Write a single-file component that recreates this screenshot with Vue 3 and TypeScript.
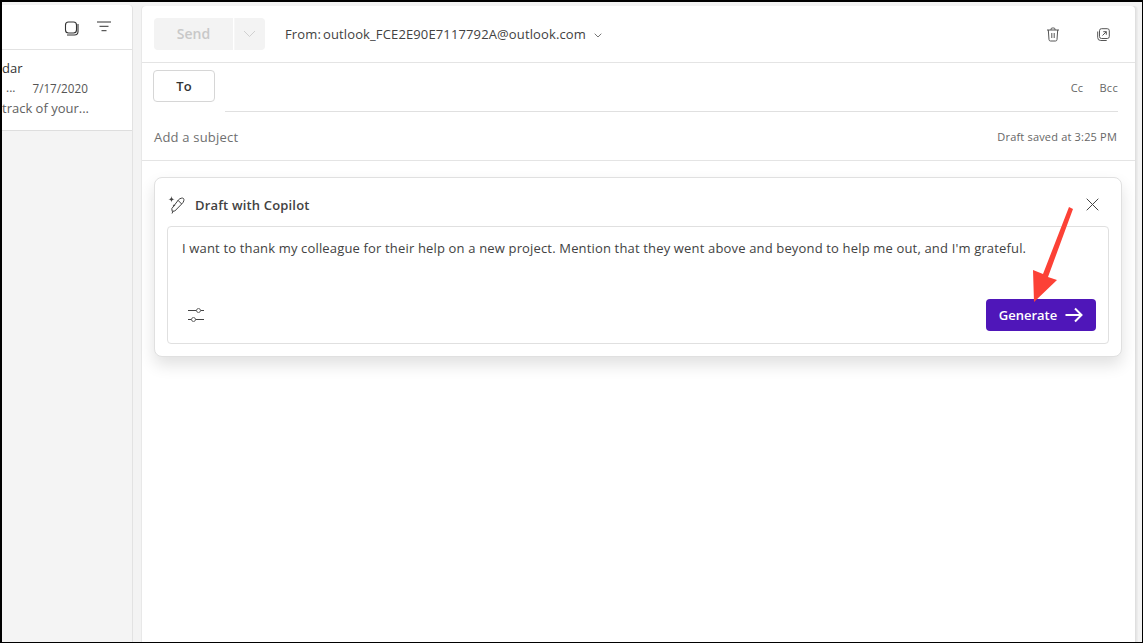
<script setup lang="ts">
const sender = 'outlook_FCE2E90E7117792A@outlook.com'
const prompt = "I want to thank my colleague for their help on a new project. Mention that they went above and beyond to help me out, and I'm grateful."
</script>

<template>
  <div class="frame">
    <aside class="list">
      <div class="list-head">
        <svg class="ic-select" width="15" height="15" viewBox="0 0 15 15" fill="none" stroke="#333" stroke-width="1.1">
          <rect x="1.5" y="1" width="11" height="11" rx="3" />
          <path d="M3 14h7.500a3.500 3.500 0 0 0 3.500-3.500V3" />
        </svg>
        <svg class="ic-filter" width="16" height="14" viewBox="0 0 16 14" fill="none" stroke="#333" stroke-width="1">
          <path d="M1 2h14M3.500 6.300h9M5.500 10.700h5" />
        </svg>
      </div>
      <div class="mail">
        <div class="m-from">dar</div>
        <div class="m-sub"><span class="dots">...</span><span class="m-date">7/17/2020</span></div>
        <div class="m-prev">track of your...</div>
      </div>
    </aside>

    <main class="pane">
      <div class="toolbar">
        <div class="send">
          <span class="send-main">Send</span>
          <span class="send-drop">
            <svg width="13" height="8" viewBox="0 0 13 8" fill="none" stroke="#d0d0d0" stroke-width="1"><path d="M1 1l5.500 5.500L12 1" /></svg>
          </span>
        </div>
        <div class="from">
          <span class="from-l">From:</span><span>{{ sender }}</span>
          <svg class="from-chev" width="8" height="5" viewBox="0 0 8 5" fill="none" stroke="#666" stroke-width="0.9"><path d="M.7.7 4 4 7.300.7" /></svg>
        </div>
        <div class="tools">
          <svg width="14" height="15" viewBox="0 0 14 15" fill="none" stroke="#555" stroke-width="1">
            <path d="M1 3h12M5 3V2.200A1.200 1.200 0 0 1 6.200 1h1.600A1.200 1.200 0 0 1 9 2.200V3M2.300 3l.7 9.600A1.500 1.500 0 0 0 4.500 14h5a1.500 1.500 0 0 0 1.500-1.400L11.700 3M5.800 6v5M8.200 6v5" />
          </svg>
          <svg width="13" height="13" viewBox="0 0 13 13" fill="none" stroke="#555" stroke-width="1">
            <rect x="2.500" y="0.700" width="9.800" height="9.800" rx="2" />
            <path d="M0.700 3.500v6a3 3 0 0 0 3 3h6M5.500 7.500 9.300 3.700M6.300 3.700h3v3" />
          </svg>
        </div>
      </div>

      <div class="to-row">
        <button class="to-btn">To</button>
        <div class="to-field">
          <span>Cc</span>
          <span>Bcc</span>
        </div>
      </div>

      <div class="subject">
        <span class="subj-text">Add a subject</span>
        <span class="saved">Draft saved at 3:25 PM</span>
      </div>

      <section class="copilot">
        <header class="cp-head">
          <svg class="cp-icon" width="19" height="19" viewBox="0 0 19 19" fill="none" stroke="#424242" stroke-width="1">
            <path d="M4.500 0c.3 2.300.9 3 3.200 3.300-2.300.3-2.900 1-3.200 3.300-.3-2.300-.9-3-3.200-3.300 2.300-.3 2.900-1 3.200-3.300z" fill="#424242" stroke="none" />
            <path d="M11.500 3.800c1.500-1.500 4-2.300 5-1.300s.2 3.500-1.300 5L7.800 15l-2.600.3-.4-2.700z" />
            <path d="M5 17.500l1-2.200M11 4.300l3.700 3.700" />
            <path d="M7 8c.1.900.5 1.300 1.400 1.400C7.500 9.500 7.100 9.900 7 10.800 6.900 9.900 6.500 9.500 5.600 9.400 6.500 9.300 6.900 8.900 7 8z" fill="#424242" stroke="none" />
          </svg>
          <span class="cp-title">Draft with Copilot</span>
          <svg class="cp-close" width="13" height="13" viewBox="0 0 13 13" fill="none" stroke="#444" stroke-width="1"><path d="M.7.7l11.600 11.600M12.300.7.700 12.300" /></svg>
        </header>
        <div class="cp-box">
          <p class="cp-text">{{ prompt }}</p>
          <div class="cp-foot">
            <svg width="16" height="14" viewBox="0 0 16 14" fill="none" stroke="#444" stroke-width="1">
              <path d="M0 2.500H8.500M12.500 2.500h3.500M0 11.500h3.500M7.500 11.500h8.500" />
              <circle cx="10.500" cy="2.500" r="2" stroke="#666" />
              <circle cx="5.500" cy="11.500" r="2" stroke="#666" />
            </svg>
            <button class="gen">
              Generate
              <svg width="18" height="16" viewBox="0 0 18 16" fill="none" stroke="#fff" stroke-width="2"><path d="M.5 8h15.800M10 1.500 16.500 8 10 14.500" /></svg>
            </button>
          </div>
        </div>
      </section>

      <svg class="arrow" width="46" height="100" viewBox="0 0 46 100">
        <path d="M39 2 43 4 18 72 27 75 4 97 3 65 13 69z" fill="#fc4136" />
      </svg>
    </main>
  </div>
</template>

<style scoped>
.frame {
  box-sizing: border-box;
  width: 1143px;
  height: 643px;
  background: #000;
  padding: 2px 1px 1px 2px;
  display: flex;
  font-family: "Open Sans", "Noto Sans", sans-serif;
  color: #333;
  overflow: hidden;
  position: relative;
}
.frame::before {
  content: "";
  position: absolute;
  inset: 2px 1px 1px 2px;
  background: #f3f3f3;
}
.list {
  position: relative;
  width: 130px;
  margin-top: 3px;
  background: #f4f4f4;
  border-right: 1px solid #e2e2e2;
  border-top-right-radius: 4px;
  align-self: stretch;
}
.list-head {
  box-sizing: border-box;
  height: 45px;
  background: #fff;
  border-bottom: 1px solid #e2e2e2;
  border-top-right-radius: 4px;
  display: flex;
  align-items: center;
  justify-content: flex-end;
  gap: 17px;
  padding-right: 20px;
}
.ic-select { margin-top: 3px; }
.mail {
  box-sizing: border-box;
  height: 81px;
  background: #fff;
  border-bottom: 1px solid #dedede;
  padding-top: 8px;
  font-size: 12px;
  line-height: 20px;
}
.m-from { font-size: 13px; color: #333; }
.m-sub { display: flex; color: #555; }
.dots { margin-left: 4px; }
.m-date { margin-left: 17px; font-size: 11.7px; }
.m-prev { color: #616161; font-size: 13px; }

.pane {
  position: relative;
  width: 993px;
  margin: 4px 0 0 9px;
  background: #fff;
  box-shadow: 1px 0 0 #dfdfdf, 2px 0 0 #e6e6e6, 3px 0 0 #ececec, -1px 0 0 #e8e8e8;
  border-radius: 4px 4px 0 0;
  align-self: stretch;
}
.toolbar {
  box-sizing: border-box;
  height: 57px;
  display: flex;
  align-items: center;
  padding: 0 25px 0 12px;
  border-bottom: 1px solid #e4e4e4;
}
.send {
  display: flex;
  height: 32px;
  width: 111px;
  background: #f3f3f3;
  border-radius: 4px;
}
.send-main {
  width: 79px;
  border-right: 1px solid #fff;
  text-align: center;
  line-height: 32px;
  font-size: 14px;
  font-weight: 600;
  color: #c8c8c8;
}
.send-drop {
  flex: 1;
  display: flex;
  align-items: center;
  justify-content: center;
  border-left: 1px solid #f7f7f7;
  padding-right: 2px;
}
.from {
  margin-left: 20px;
  font-size: 13px;
  letter-spacing: 0.13px;
  color: #424242;
  display: flex;
  align-items: center;
}
.from-l { margin-right: 2px; }
.from-chev { margin-left: 8px; margin-top: 2px; }
.tools {
  margin-left: auto;
  display: flex;
  align-items: center;
  gap: 37px;
}
.to-row {
  position: relative;
  height: 49px;
  display: flex;
  padding-left: 11px;
}
.to-btn {
  box-sizing: border-box;
  width: 62px;
  height: 32px;
  margin-top: 7px;
  background: #fff;
  border: 1px solid #d6d6d6;
  border-radius: 4px;
  font: 600 13px "Open Sans", sans-serif;
  color: #333;
  padding: 0;
}
.to-field {
  flex: 1;
  margin: 0 17px 0 10px;
  border-bottom: 1px solid #e0e0e0;
  display: flex;
  justify-content: flex-end;
  align-items: center;
  gap: 16px;
  font-size: 11px;
  letter-spacing: 0.3px;
  color: #666;
}
.subject {
  box-sizing: border-box;
  height: 49px;
  display: flex;
  justify-content: space-between;
  align-items: center;
  padding: 1px 18px 0 12px;
  border-bottom: 1px solid #e4e4e4;
}
.subj-text { font-size: 13px; letter-spacing: 0.2px; color: #6f6f6f; }
.saved { font-size: 11px; letter-spacing: 0.18px; color: #666; margin-top: -1px; }
.copilot {
  box-sizing: border-box;
  width: 968px;
  height: 180px;
  margin: 16px 0 0 12px;
  border: 1px solid #e0e0e0;
  border-radius: 8px;
  background: #fff;
  box-shadow: 0 8px 16px rgba(0, 0, 0, 0.12);
  padding: 0 12px;
}
.cp-head {
  box-sizing: border-box;
  height: 48px;
  padding-top: 6px;
  display: flex;
  align-items: center;
}
.cp-title {
  margin-left: 9px;
  font-size: 13px;
  letter-spacing: 0.17px;
  font-weight: 600;
  color: #424242;
}
.cp-close { margin-left: auto; margin-right: 10px; margin-top: -1px; }
.cp-box {
  box-sizing: border-box;
  height: 118px;
  border: 1px solid #e0e0e0;
  border-radius: 4px;
  padding: 12px 12px 0 14px;
  display: flex;
  flex-direction: column;
}
.cp-text {
  margin: 0;
  font-size: 13px;
  letter-spacing: 0.16px;
  line-height: 19px;
  color: #424242;
  white-space: nowrap;
}
.cp-foot {
  margin-top: 41px;
  display: flex;
  justify-content: space-between;
  align-items: center;
  padding-left: 6px;
}
.gen {
  box-sizing: border-box;
  width: 110px;
  height: 32px;
  background: #4f16b9;
  border: 0;
  border-radius: 4px;
  color: #fff;
  font: 600 13px "Open Sans", sans-serif;
  display: flex;
  align-items: center;
  justify-content: center;
  gap: 8px;
  padding: 0;
}
.arrow {
  position: absolute;
  left: 888px;
  top: 199px;
}
</style>
